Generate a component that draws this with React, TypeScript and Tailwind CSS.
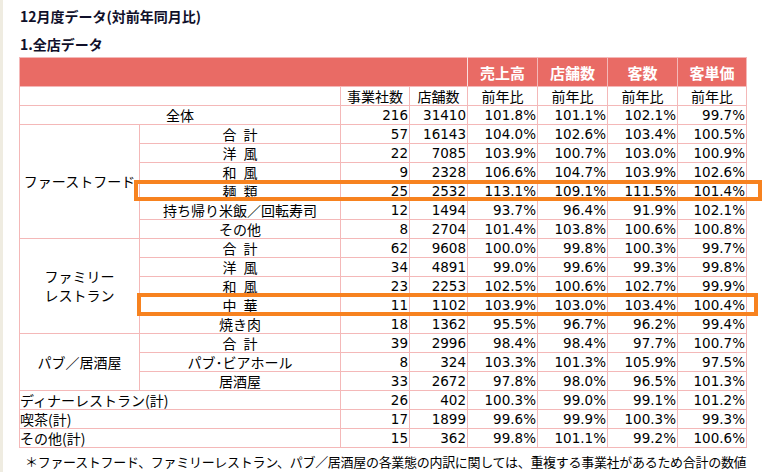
import React from "react";

type Row = [string, number, number, string, string, string, string];

const jp = "font-['Noto_Sans_CJK_JP','Noto_Sans',sans-serif]";
const num = "font-['DejaVu_Sans','Noto_Sans_CJK_JP',sans-serif] text-[13.5px] text-right pr-[1px]";

const groups: { label: string[]; rows: Row[] }[] = [
  {
    label: ["ファーストフード"],
    rows: [
      ["合\u2002計", 57, 16143, "104.0%", "102.6%", "103.4%", "100.5%"],
      ["洋\u2002風", 22, 7085, "103.9%", "100.7%", "103.0%", "100.9%"],
      ["和\u2002風", 9, 2328, "106.6%", "104.7%", "103.9%", "102.6%"],
      ["麺\u2002類", 25, 2532, "113.1%", "109.1%", "111.5%", "101.4%"],
      ["持ち帰り米飯／回転寿司", 12, 1494, "93.7%", "96.4%", "91.9%", "102.1%"],
      ["その他", 8, 2704, "101.4%", "103.8%", "100.6%", "100.8%"],
    ],
  },
  {
    label: ["ファミリー", "レストラン"],
    rows: [
      ["合\u2002計", 62, 9608, "100.0%", "99.8%", "100.3%", "99.7%"],
      ["洋\u2002風", 34, 4891, "99.0%", "99.6%", "99.3%", "99.8%"],
      ["和\u2002風", 23, 2253, "102.5%", "100.6%", "102.7%", "99.9%"],
      ["中\u2002華", 11, 1102, "103.9%", "103.0%", "103.4%", "100.4%"],
      ["焼き肉", 18, 1362, "95.5%", "96.7%", "96.2%", "99.4%"],
    ],
  },
  {
    label: ["パブ／居酒屋"],
    rows: [
      ["合\u2002計", 39, 2996, "98.4%", "98.4%", "97.7%", "100.7%"],
      ["パブ･ビアホール", 8, 324, "103.3%", "101.3%", "105.9%", "97.5%"],
      ["居酒屋", 33, 2672, "97.8%", "98.0%", "96.5%", "101.3%"],
    ],
  },
];

const totals: Row[] = [
  ["ディナーレストラン(計)", 26, 402, "100.3%", "99.0%", "99.1%", "101.2%"],
  ["喫茶(計)", 17, 1899, "99.6%", "99.9%", "100.3%", "99.3%"],
  ["その他(計)", 15, 362, "99.8%", "101.1%", "99.2%", "100.6%"],
];

const cell = "border border-[#f4b8b8] p-0";

function Nums({ r }: { r: Row }) {
  return (
    <>
      {r.slice(1).map((v, i) => (
        <td key={i} className={`${cell} ${num}`}>
          {v}
        </td>
      ))}
    </>
  );
}

export default function App() {
  return (
    <div className="flex min-h-[472px] bg-white text-black">
      <div className="w-[3px] shrink-0 bg-[#efece1]" />
      <div className={`${jp} pl-[16px] pt-[6px]`}>
        <h1 className="pl-[1px] text-[14px] font-bold leading-[20px] text-[#10102a]">12月度データ(対前年同月比)</h1>
        <h2 className="mt-[8px] pl-[1px] text-[14px] font-bold leading-[20px] text-[#10102a]">1.全店データ</h2>

        <div className="relative mt-[3px]">
          <table className="w-[727px] table-fixed border-collapse text-[14px] leading-[17px]">
            <colgroup>
              <col className="w-[120px]" />
              <col className="w-[201px]" />
              <col className="w-[69px]" />
              <col className="w-[58px]" />
              <col className="w-[70px]" />
              <col className="w-[70px]" />
              <col className="w-[70px]" />
              <col className="w-[69px]" />
            </colgroup>
            <tbody>
              <tr className="h-[29px] bg-[#e96b65] text-[15px] font-bold text-white">
                <td colSpan={4} className="border border-[#f4b8b8] border-r-[#fbdede] p-0" />
                {["売上高", "店舗数", "客数", "客単価"].map((h) => (
                  <td key={h} className="border border-[#f4b8b8] border-l-[#fbdede] p-0 text-center">
                    {h}
                  </td>
                ))}
              </tr>
              <tr className="h-[19px]">
                <td colSpan={2} className={cell} />
                <td className={`${cell} text-center`}>事業社数</td>
                <td className={`${cell} text-center`}>店舗数</td>
                {[0, 1, 2, 3].map((i) => (
                  <td key={i} className={`${cell} text-center`}>
                    前年比
                  </td>
                ))}
              </tr>
              <tr className="h-[19px]">
                <td colSpan={2} className={`${cell} text-center`}>
                  全体
                </td>
                <Nums r={["", 216, 31410, "101.8%", "101.1%", "102.1%", "99.7%"]} />
              </tr>
              {groups.map((g) =>
                g.rows.map((r, i) => (
                  <tr key={g.label[0] + i} className="h-[19px]">
                    {i === 0 && (
                      <td rowSpan={g.rows.length} className={`${cell} text-center leading-[19px]`}>
                        {g.label.map((l) => (
                          <div key={l}>{l}</div>
                        ))}
                      </td>
                    )}
                    <td className={`${cell} text-center`}>{r[0]}</td>
                    <Nums r={r} />
                  </tr>
                ))
              )}
              {totals.map((r) => (
                <tr key={r[0]} className="h-[19px]">
                  <td colSpan={2} className={`${cell} text-left`}>
                    {r[0]}
                  </td>
                  <Nums r={r} />
                </tr>
              ))}
            </tbody>
          </table>

          {/* 強調枠（麺類・中華） */}
          <div className="pointer-events-none absolute left-[115px] top-[123px] h-[21px] w-[628px] border-4 border-[#f7821f]" />
          <div className="pointer-events-none absolute left-[118px] top-[236px] h-[23px] w-[621px] border-4 border-[#f7821f]" />
        </div>

        <p className="mt-[5px] w-[733px] pl-[6px] text-[13px] leading-[18px] tracking-[-0.3px]">
          ＊ファーストフード、ファミリーレストラン、パブ／居酒屋の各業態の内訳に関しては、重複する事業社があるため合計の数値と一致しない場合があります。
        </p>
      </div>
    </div>
  );
}
